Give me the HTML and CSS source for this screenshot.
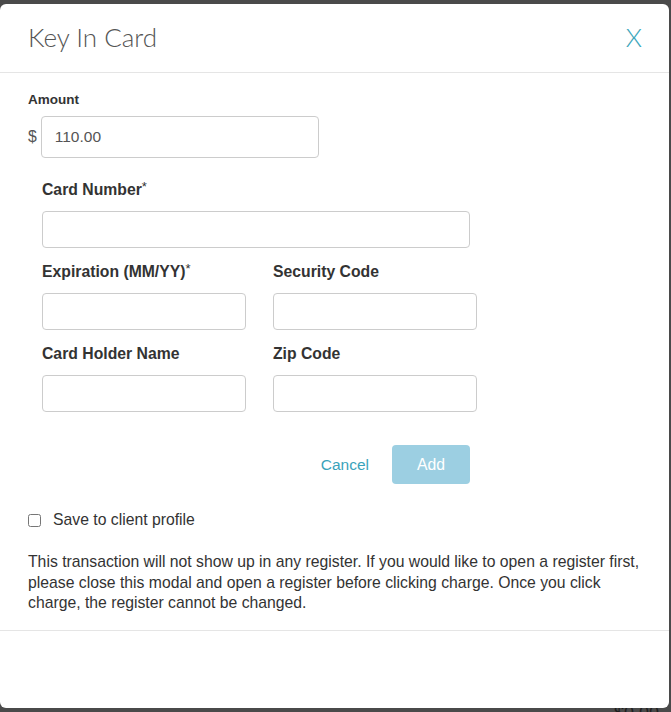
FILE: index.html
```html
<!DOCTYPE html>
<html lang="en">
<head>
<meta charset="utf-8">
<title>Key In Card</title>
<link rel="stylesheet" href="styles.css">
</head>
<body>
<div class="backdrop-amount">$0.00</div>
<div class="modal">
  <div class="modal-header">
    <h2 class="modal-title">Key In Card</h2>
    <span class="modal-close">X</span>
  </div>
  <div class="modal-body">
    <div class="amount-label">Amount</div>
    <div class="amount-row">
      <span class="currency">$</span>
      <input class="field amount-input" type="text" value="110.00">
    </div>
    <div class="card-form">
      <div class="form-field">
        <label class="field-label">Card Number<sup>*</sup></label>
        <input class="field card-number" type="text">
      </div>
      <div class="form-grid">
        <div class="form-field">
          <label class="field-label">Expiration (MM/YY)<sup>*</sup></label>
          <input class="field half" type="text">
        </div>
        <div class="form-field">
          <label class="field-label">Security Code</label>
          <input class="field half" type="text">
        </div>
        <div class="form-field">
          <label class="field-label">Card Holder Name</label>
          <input class="field half" type="text">
        </div>
        <div class="form-field">
          <label class="field-label">Zip Code</label>
          <input class="field half" type="text">
        </div>
      </div>
      <div class="actions">
        <a class="btn-cancel">Cancel</a>
        <button class="btn-add" type="button">Add</button>
      </div>
    </div>
    <label class="save-row">
      <input class="save-check" type="checkbox">
      <span>Save to client profile</span>
    </label>
    <p class="notice">This transaction will not show up in any register. If you would like to open a register first, please close this modal and open a register before clicking charge. Once you click charge, the register cannot be changed.</p>
  </div>
  <div class="modal-footer"></div>
</div>
</body>
</html>
```

FILE: styles.css
```css
html, body {
  margin: 0;
  padding: 0;
}
body {
  background: #4a4a4a;
  font-family: "Liberation Sans", Arial, sans-serif;
  color: #333;
  overflow: hidden;
  height: 712px;
}
.backdrop-amount {
  position: absolute;
  right: 12px;
  top: 703px;
  font-size: 18px;
  color: #1e1e1e;
}
.modal {
  position: relative;
  margin: 4px 2px 0 0;
  height: 704px;
  background: #fff;
  border-radius: 6px;
  display: flex;
  flex-direction: column;
  box-sizing: border-box;
}
.modal-header {
  height: 68px;
  border-bottom: 1px solid #e5e5e5;
  display: flex;
  align-items: center;
  justify-content: space-between;
  padding: 0 27px 0 28px;
  box-sizing: content-box;
}
.modal-title {
  margin: 0 0 2px 0;
  font-family: Lato, "Liberation Sans", sans-serif;
  font-weight: 300;
  font-size: 26px;
  color: #555;
  line-height: 30px;
}
.modal-close {
  margin-bottom: 2px;
  font-family: Lato, "Liberation Sans", sans-serif;
  font-weight: 300;
  font-size: 26px;
  line-height: 30px;
  color: #3aa6bb;
}
.modal-body {
  padding: 19px 20px 16px 28px;
  border-bottom: 1px solid #e5e5e5;
}
.amount-label {
  font-size: 13.5px;
  font-weight: bold;
  line-height: 16px;
  color: #333;
}
.amount-row {
  display: flex;
  align-items: center;
  margin-top: 8px;
}
.currency {
  font-size: 15.75px;
  color: #555;
  margin-right: 4px;
}
.field {
  box-sizing: border-box;
  border: 1px solid #ccc;
  border-radius: 4px;
  background: #fff;
  font-family: "Liberation Sans", Arial, sans-serif;
  margin: 0;
  outline: none;
  display: block;
}
.amount-input {
  width: 278px;
  height: 42px;
  padding: 0 13px;
  font-size: 15.5px;
  color: #555;
}
.card-form {
  margin-left: 14px;
  margin-top: 22px;
  width: 435px;
}
.form-field {
  display: flex;
  flex-direction: column;
}
.field-label {
  font-size: 15.75px;
  font-weight: bold;
  line-height: 20px;
  margin-bottom: 11px;
  color: #333;
}
.field-label sup {
  font-size: 13px;
  font-weight: normal;
  vertical-align: top;
  line-height: 14px;
}
.card-number {
  width: 428px;
  height: 37px;
}
.form-grid {
  display: grid;
  grid-template-columns: 204px 204px;
  column-gap: 27px;
  row-gap: 14px;
  margin-top: 14px;
}
.half {
  width: 204px;
  height: 37px;
}
.actions {
  width: 428px;
  display: flex;
  justify-content: flex-end;
  align-items: center;
  margin-top: 33px;
}
.btn-cancel {
  font-size: 15.5px;
  color: #3aa3bb;
  margin-right: 23px;
}
.btn-add {
  width: 78px;
  height: 39px;
  border: none;
  border-radius: 4px;
  background: #9ccfe2;
  color: #fff;
  font-family: "Liberation Sans", Arial, sans-serif;
  font-size: 15.75px;
  padding: 0;
}
.save-row {
  display: flex;
  align-items: center;
  margin-top: 26px;
  height: 20px;
  font-size: 15.75px;
  color: #333;
}
.save-check {
  width: 13px;
  height: 13px;
  margin: 0 12px 0 0;
}
.notice {
  margin: 22px 0 0 0;
  font-size: 15.75px;
  line-height: 20.5px;
  color: #333;
}
.modal-footer {
  flex: 1;
}
```
